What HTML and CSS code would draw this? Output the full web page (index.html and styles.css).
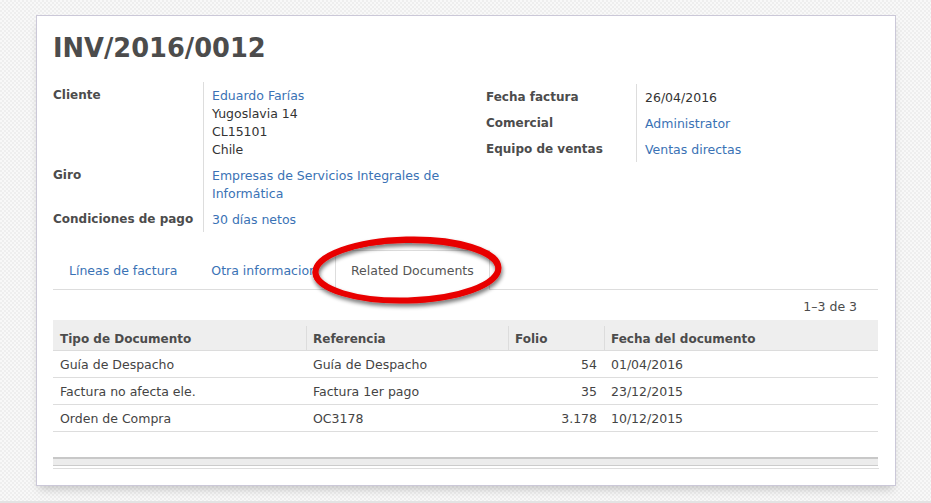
FILE: index.html
```html
<!DOCTYPE html>
<html>
<head>
<meta charset="utf-8">
<link rel="stylesheet" href="styles.css">
</head>
<body>
<div class="page">
  <div class="sheet">
    <h1 class="title">INV/2016/0012</h1>
    <div class="groups">
      <div class="group group-left">
        <div class="label">Cliente</div>
        <div class="value">
          <a class="link">Eduardo Farías</a>
          <div>Yugoslavia 14</div>
          <div>CL15101</div>
          <div>Chile</div>
        </div>
        <div class="label">Giro</div>
        <div class="value"><a class="link">Empresas de Servicios Integrales de Informática</a></div>
        <div class="label">Condiciones de pago</div>
        <div class="value"><a class="link">30 días netos</a></div>
      </div>
      <div class="group group-right">
        <div class="label">Fecha factura</div>
        <div class="value">26/04/2016</div>
        <div class="label">Comercial</div>
        <div class="value"><a class="link">Administrator</a></div>
        <div class="label">Equipo de ventas</div>
        <div class="value"><a class="link">Ventas directas</a></div>
      </div>
    </div>

    <div class="tabs">
      <a class="tab">Líneas de factura</a>
      <a class="tab">Otra informacion</a>
      <a class="tab active">Related Documents</a>
    </div>

    <div class="pager">1–3 de 3</div>

    <table class="list">
      <thead>
        <tr>
          <th class="c1">Tipo de Documento</th>
          <th class="c2 sep">Referencia</th>
          <th class="c3 sep">Folio</th>
          <th class="c4 sep">Fecha del documento</th>
        </tr>
      </thead>
      <tbody>
        <tr><td>Guía de Despacho</td><td>Guía de Despacho</td><td class="num">54</td><td>01/04/2016</td></tr>
        <tr><td>Factura no afecta ele.</td><td>Factura 1er pago</td><td class="num">35</td><td>23/12/2015</td></tr>
        <tr><td>Orden de Compra</td><td>OC3178</td><td class="num">3.178</td><td>10/12/2015</td></tr>
      </tbody>
    </table>

    <div class="list-foot"></div>
    <div class="list-foot-line"></div>

    <svg class="highlight" width="220" height="90" viewBox="0 0 220 90" aria-hidden="true">
      <defs>
        <filter id="sh" x="-20%" y="-30%" width="140%" height="160%">
          <feGaussianBlur in="SourceAlpha" stdDeviation="2"/>
          <feOffset dx="1" dy="3" result="b"/>
          <feComponentTransfer><feFuncA type="linear" slope="0.55"/></feComponentTransfer>
          <feMerge><feMergeNode/><feMergeNode in="SourceGraphic"/></feMerge>
        </filter>
      </defs>
      <g filter="url(#sh)">
        <ellipse cx="107" cy="42" rx="91.5" ry="30.5" transform="rotate(-1.5 107 42)" fill="none" stroke="#e80000" stroke-width="6"/>
        <ellipse cx="106" cy="43" rx="91.5" ry="30" transform="rotate(-1 106 43)" fill="none" stroke="#e80000" stroke-width="4"/>
      </g>
    </svg>
  </div>
  <div class="page-bottom"></div>
</div>
</body>
</html>
```

FILE: styles.css
```css
html, body {
  margin: 0;
  padding: 0;
}

body {
  height: 503px;
  overflow: hidden;
  background: repeating-conic-gradient(#eeeeee 0 25%, #f8f8f8 0 50%) 0 0 / 4px 4px;
  font-family: "DejaVu Sans", "Liberation Sans", sans-serif;
  font-size: 12.5px;
  line-height: 18px;
  color: #444;
}

.page {
  padding-top: 15px;
}

.sheet {
  position: relative;
  box-sizing: border-box;
  width: 860px;
  height: 471px;
  margin-left: 36px;
  background: #fff;
  border: 1px solid #cbc8d8;
  box-shadow: 0 6px 9px -3px rgba(0, 0, 0, 0.2);
  padding: 17px 17px 0 16px;
}

.title {
  margin: 0 0 18px 0;
  font-size: 25.7px;
  line-height: 31px;
  font-weight: bold;
  color: #4c4c4c;
}

.groups {
  display: flex;
}

.group {
  display: grid;
  grid-template-columns: 150px 1fr;
  align-content: start;
}

.group-left {
  width: 433px;
  flex: none;
}

.group-right {
  flex: 1;
  margin-top: 2px;
}

.label {
  font-size: 12px;
  font-weight: bold;
  color: #4c4c4c;
  padding: 4px 0 4px 0;
}

.value {
  border-left: 1px solid #ddd;
  padding: 5px 0 3px 8px;
  color: #333;
}

.group-left .value {
  padding-right: 8px;
}

.link {
  display: block;
  color: #3a72b5;
  text-decoration: none;
}

.tabs {
  display: flex;
  gap: 2px;
  margin-top: 18px;
  border-bottom: 1px solid #ddd;
}

.tab {
  display: block;
  padding: 1px 15px 0 15px;
  line-height: 37px;
  border: 1px solid transparent;
  border-bottom: none;
  color: #3a72b5;
}

.tab:first-child {
  padding-left: 15px;
}

.tab.active {
  color: #555;
  border-color: #ddd;
  background: #fff;
  margin-bottom: -1px;
  padding-bottom: 1px;
}

.pager {
  text-align: right;
  padding: 8px 21px 0 0;
  color: #4c4c4c;
}

.list {
  width: 100%;
  margin-top: 4px;
  border-collapse: collapse;
  color: #444;
}

.list th {
  text-align: left;
  font-size: 12px;
  font-weight: bold;
  color: #4c4c4c;
  background: #eeeeee;
  padding: 10px 7px 2px 7px;
  border-bottom: 1px solid #dcdcdc;
}

.list th.sep {
  background: linear-gradient(#dcdcdc, #dcdcdc) 0 6px / 1px 100% no-repeat, #eeeeee;
}

.list th.c1 { width: 239px; }
.list th.c2 { width: 188px; }
.list th.c3 { width: 82px; }

.list td {
  padding: 5px 7px 3px 7px;
  border-bottom: 1px solid #dddddd;
}

.list td.num {
  text-align: right;
}

.list-foot {
  margin-top: 25px;
  height: 6px;
  background: #ececec;
  border-top: 2px solid #c8c8c8;
  border-bottom: 1px solid #cccccc;
}

.list-foot-line {
  margin-top: 2px;
  margin-right: -1px;
  border-top: 1px solid #dddddd;
}

.highlight {
  position: absolute;
  left: 263px;
  top: 212px;
}

.page-bottom {
  margin-top: 15px;
  border-top: 2px solid #e3e3e3;
}
```
